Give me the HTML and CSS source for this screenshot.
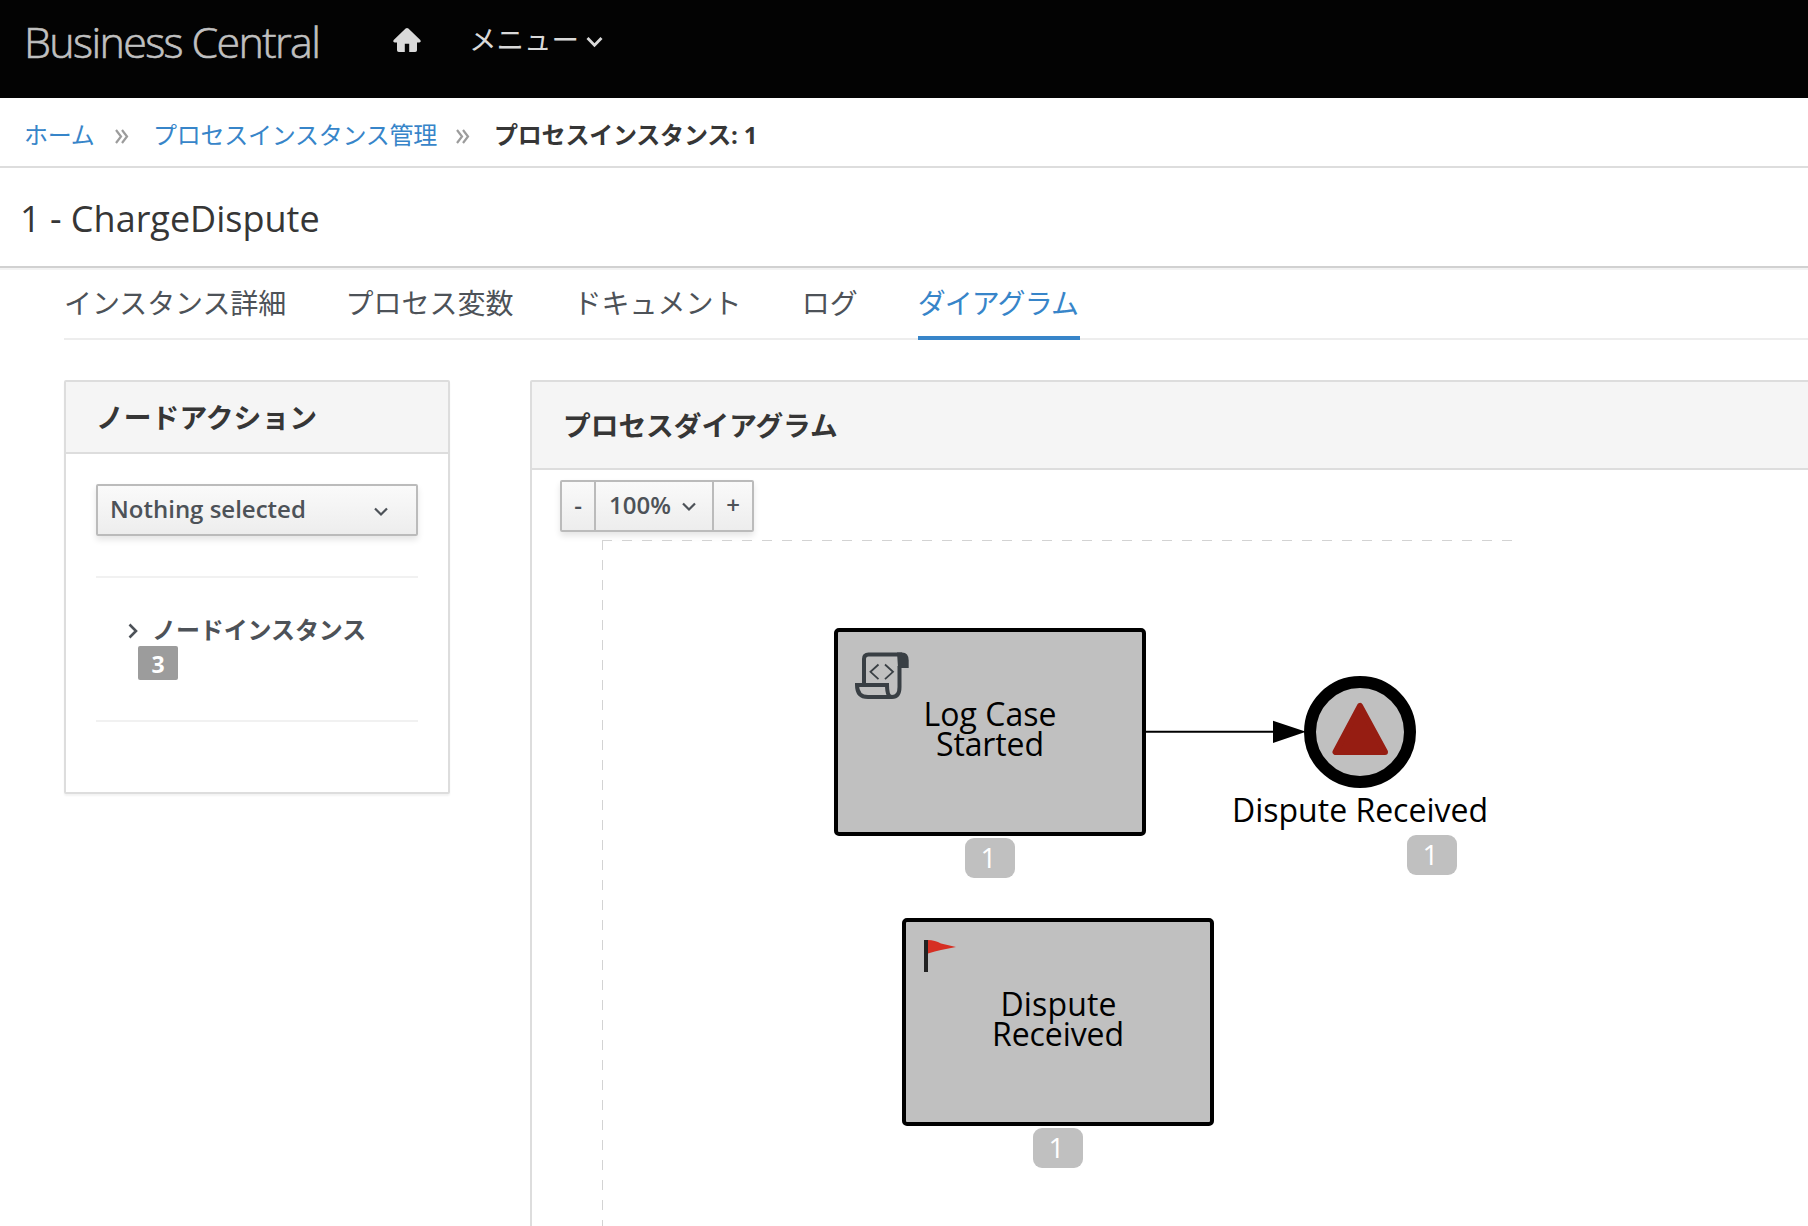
FILE: index.html
```html
<!DOCTYPE html>
<html lang="ja">
<head>
<meta charset="utf-8">
<title>Business Central</title>
<link rel="stylesheet" href="styles.css">
</head>
<body>
<header class="masthead">
  <div class="brand">Business Central</div>
  <svg class="home" width="28" height="24" viewBox="0 0 28 24"><path d="M12.6.6Q14-.6 15.400.6L27.300 12Q28.600 14.200 26.300 14.500H24V22.200Q24 24 22.200 24H16.200V15.800H11.800V24H5.800Q4 24 4 22.200V14.500H1.700Q-.6 14.200.7 12Z"/></svg>
  <div class="menu">メニュー</div>
  <svg class="menu-caret" width="17" height="12" viewBox="0 0 17 12"><path d="M1.500 2l7 7.300L15.500 2"/></svg>
</header>
<nav class="breadcrumb">
  <a class="crumb crumb-home">ホーム</a>
  <svg class="sep" width="14" height="15" viewBox="0 0 14 15"><path d="M1 1l5 6.500-5 6.500M7 1l5 6.500-5 6.500"/></svg>
  <a class="crumb crumb-manage">プロセスインスタンス管理</a>
  <svg class="sep" width="14" height="15" viewBox="0 0 14 15"><path d="M1 1l5 6.500-5 6.500M7 1l5 6.500-5 6.500"/></svg>
  <strong class="crumb-current">プロセスインスタンス: 1</strong>
</nav>
<h1 class="title">1 - ChargeDispute</h1>
<main class="content">
  <nav class="tabs">
    <a class="tab">インスタンス詳細</a>
    <a class="tab">プロセス変数</a>
    <a class="tab">ドキュメント</a>
    <a class="tab">ログ</a>
    <a class="tab active">ダイアグラム</a>
  </nav>
  <div class="columns">
    <section class="panel actions">
      <h2 class="panel-title">ノードアクション</h2>
      <div class="actions-body">
        <div class="select"><span>Nothing selected</span><svg width="14" height="10" viewBox="0 0 14 10"><path d="M1 1.500l6 6 6-6"/></svg></div>
        <div class="instances">
          <div class="instances-head"><svg width="10" height="16" viewBox="0 0 10 16"><path d="M1.500 1.500L8 8l-6.500 6.500"/></svg><span>ノードインスタンス</span></div>
          <span class="count">3</span>
        </div>
      </div>
    </section>
    <section class="panel diagram">
      <h2 class="panel-title">プロセスダイアグラム</h2>
      <div class="zoom">
        <span class="zoom-btn minus">-</span>
        <span class="zoom-btn level">100%<svg width="14" height="10" viewBox="0 0 14 10"><path d="M1 1.500l6 6 6-6"/></svg></span>
        <span class="zoom-btn plus">+</span>
      </div>
      <svg class="canvas" width="1276" height="694" viewBox="532 532 1276 694">
        <path class="bounds" d="M602 540.500H1512M602.500 540V1226"/>
        <rect class="node" x="836" y="630" width="308" height="204" rx="3"/>
        <g class="script">
          <path d="M864 683V659Q864 654.500 868.500 654.500H902"/>
          <path d="M899.500 666V687Q899.500 697 892 697H868Q857 697 857 685H887Q887 697 892 697"/>
          <path class="curl" d="M897 652.500H902Q908.700 652.500 908.700 660.500V668H898Z"/>
          <path class="code" d="M878.500 664.500l-8 7.300 8 7.300M885 664.500l8 7.300-8 7.300"/>
        </g>
        <text class="label" x="990" y="726" textLength="133">Log Case</text>
        <text class="label" x="990" y="756" textLength="108">Started</text>
        <path class="flow" d="M1146 731.800H1275"/>
        <path class="arrow" d="M1273 720.800L1306 731.800L1273 743Z"/>
        <circle class="event" cx="1360" cy="732" r="50"/>
        <path class="signal" d="M1360 706L1335.500 752H1385Z"/>
        <text class="label" x="1360" y="822" textLength="256">Dispute Received</text>
        <rect class="node" x="904" y="920" width="308" height="204" rx="3"/>
        <rect class="pole" x="924" y="940" width="4" height="32"/>
        <path class="flag" d="M928 940q7 0 13 3.500l15 3.500-15 3q-6 1-13 3.500z"/>
        <text class="label" x="1058.500" y="1016" textLength="116">Dispute</text>
        <text class="label" x="1058" y="1046" textLength="132">Received</text>
        <rect class="badge" x="965" y="838" width="50" height="40" rx="9"/>
        <text class="badge-text" x="988.500" y="868">1</text>
        <rect class="badge" x="1407" y="835" width="50" height="40" rx="9"/>
        <text class="badge-text" x="1430.500" y="865">1</text>
        <rect class="badge" x="1033" y="1128" width="50" height="40" rx="9"/>
        <text class="badge-text" x="1056.500" y="1158">1</text>
      </svg>
    </section>
  </div>
</main>
</body>
</html>
```
FILE: styles.css
```css
* { box-sizing: border-box; }
body { margin: 0; height: 1226px; overflow: hidden; background: #fff; color: #363636; font-family: "Open Sans", "Noto Sans CJK JP", sans-serif; font-size: 24px; }
svg { display: block; flex: none; }
h1, h2 { margin: 0; }
.masthead { display: flex; align-items: flex-start; height: 98px; padding-left: 24px; background: #030303; color: #d9d9d9; white-space: nowrap; }
.brand { width: 369px; padding-top: 12px; font-size: 43px; line-height: 60px; font-weight: 300; letter-spacing: -1.650px; color: #c0c0c0; -webkit-text-stroke: .6px #c0c0c0; }
.home { margin-top: 28px; fill: #d9d9d9; }
.menu { width: 117px; margin-left: 48px; padding-top: 20px; font-size: 27.500px; line-height: 40px; white-space: nowrap; }
.menu-caret { margin-top: 36px; fill: none; stroke: #d9d9d9; stroke-width: 2.800; }
.breadcrumb { display: flex; align-items: center; height: 70px; padding: 2px 0 0 24px; border-bottom: 2px solid #ddd; white-space: nowrap; }
.crumb { color: #3785c9; letter-spacing: -.25px; }
.crumb-home { width: 91px; }
.crumb-manage { width: 303px; }
.sep { margin-top: 7px; fill: none; stroke: #9c9c9c; stroke-width: 2.200; }
.sep + .crumb-manage { margin-left: 24px; }
.crumb-current { margin-left: 24px; font-weight: 700; letter-spacing: -.2px; }
.title { height: 100px; padding-left: 20px; border-bottom: 2px solid #d1d1d1; box-shadow: 0 2px 0 #f3f3f3; font-size: 36px; line-height: 101px; font-weight: 400; }
.content { padding-left: 64px; }
.tabs { display: flex; height: 72px; border-bottom: 2px solid #ededed; color: #4d5258; font-size: 28px; line-height: 70px; white-space: nowrap; gap: 60px; }
.tab { height: 72px; }
.tab:first-child { margin-right: -.5px; letter-spacing: -.1px; }
.tab.active { width: 162px; border-bottom: 4px solid #3785c9; color: #3785c9; letter-spacing: -.9px; }
.columns { display: flex; gap: 80px; padding-top: 40px; align-items: flex-start; }
.panel { flex: none; border: 2px solid #ddd; border-radius: 2px; background: #fff; }
.panel-title { background: #f5f5f5; border-bottom: 2px solid #ddd; font-weight: 700; white-space: nowrap; }
.actions { width: 386px; height: 414px; box-shadow: 0 2px 2px rgba(3,3,3,.05); }
.actions .panel-title { height: 72px; padding-left: 30px; font-size: 27.800px; line-height: 70px; }
.actions-body { padding: 30px; }
.select { display: flex; align-items: center; justify-content: space-between; height: 52px; padding: 0 28px 4px 12px; border: 2px solid #bbb; border-radius: 2px; background: linear-gradient(#fafafa, #ededed); box-shadow: 0 4px 6px rgba(3,3,3,.1); color: #4d5258; font-weight: 600; }
.select svg, .level svg { margin-top: 7px; fill: none; stroke: #4d5258; stroke-width: 2.200; }
.level svg { margin-top: 4px; }
.instances { height: 146px; margin-top: 40px; border-top: 2px solid #f1f1f1; border-bottom: 2px solid #f1f1f1; padding: 36px 0 0 32px; color: #4d5258; }
.instances-head { display: flex; align-items: center; height: 32px; gap: 14px; padding-bottom: 3px; font-weight: 700; letter-spacing: -.1px; white-space: nowrap; }
.instances-head svg { margin-top: 5px; fill: none; stroke: #4d5258; stroke-width: 2.600; }
.count { display: block; width: 40px; height: 34px; margin-left: 10px; border-radius: 2px; background: #9c9c9c; color: #fff; font-size: 23px; line-height: 36px; font-weight: 700; text-align: center; }
.diagram { width: 1290px; height: 870px; }
.diagram .panel-title { height: 88px; padding-left: 31px; font-size: 27.700px; line-height: 87px; }
.zoom { display: flex; width: 194px; height: 52px; margin: 10px 0 0 28px; border: 2px solid #bbb; border-radius: 2px; background: linear-gradient(#fafafa, #ededed); box-shadow: 0 4px 6px rgba(3,3,3,.1); color: #4d5258; font-size: 24px; line-height: 46px; font-weight: 600; }
.zoom-btn { display: flex; align-items: center; justify-content: center; height: 48px; padding-bottom: 2px; }
.minus { width: 32px; }
.level { width: 120px; gap: 11px; padding-right: 3px; border-left: 2px solid #bbb; border-right: 2px solid #bbb; }
.plus { flex: 1; }
.bounds { fill: none; stroke: #d3d3d3; stroke-width: 1; stroke-dasharray: 10 10; }
.node { fill: #c0c0c0; stroke: #000; stroke-width: 4; }
.script { fill: none; stroke: #393f44; stroke-width: 4; }
.script .curl { fill: #393f44; stroke: none; }
.script .code { stroke-width: 1.800; }
.label { font-size: 32px; text-anchor: middle; fill: #000; }
.flow { stroke: #000; stroke-width: 2; }
.event { fill: #c0c0c0; stroke: #000; stroke-width: 12; }
.signal { fill: #961d12; stroke: #961d12; stroke-width: 6; stroke-linejoin: round; }
.pole { fill: #222; }
.flag { fill: #d62f23; }
.badge { fill: #c0c0c0; }
.badge-text { font-size: 28px; text-anchor: middle; fill: #fff; }
```
